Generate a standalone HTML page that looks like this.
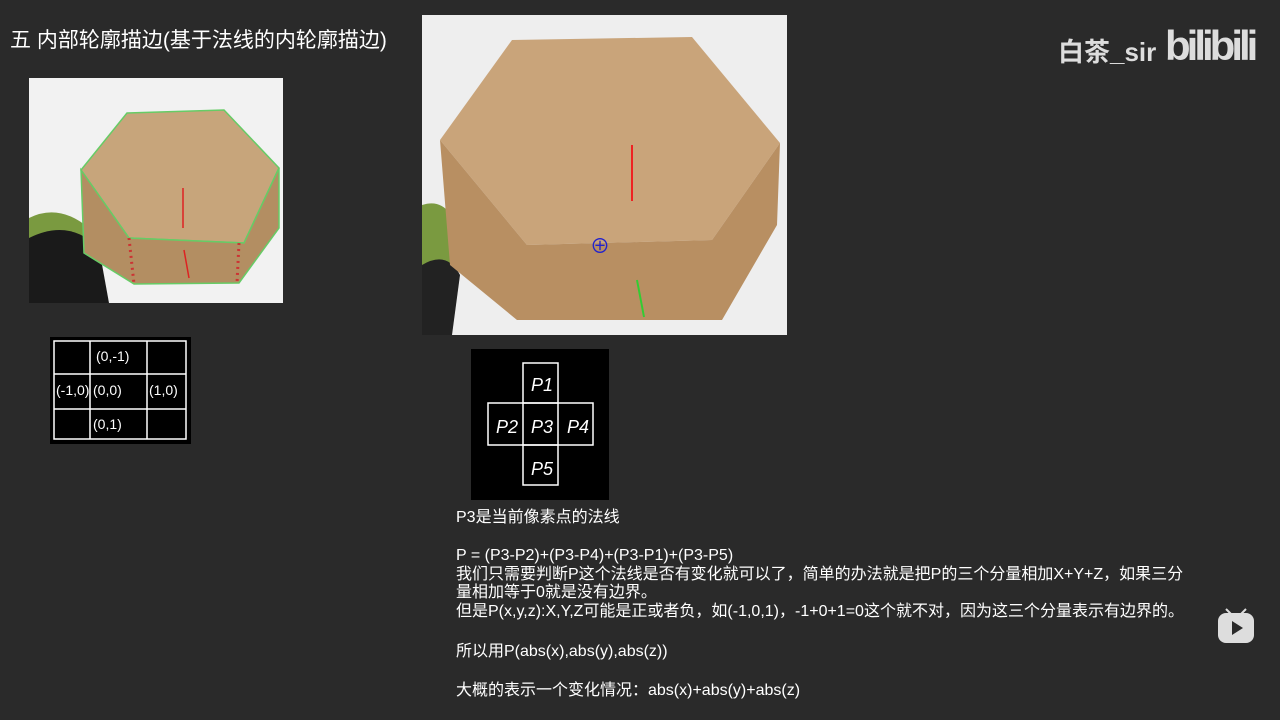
<!DOCTYPE html>
<html><head><meta charset="utf-8"><style>
body{margin:0;width:1280px;height:720px;background:#2a2a2a;position:relative;overflow:hidden;font-family:"Liberation Sans","Noto Sans CJK SC",sans-serif;color:#fff}
.a{position:absolute;white-space:nowrap}
.t{font-size:16px;line-height:17px}
</style></head><body>
<div class="a" style="left:10px;top:24px;font-size:21px">五 内部轮廓描边(基于法线的内轮廓描边)</div>
<div class="a" style="left:1058px;top:32px;font-size:26px;color:#ddd;font-weight:bold">白茶_sir</div>
<div class="a" style="left:1165px;top:22px;font-size:42px;color:#ddd;font-weight:bold;letter-spacing:-4px">bilibili</div>

<svg class="a" style="left:29px;top:78px" width="254" height="225" viewBox="0 0 254 225">
<rect width="254" height="225" fill="#f2f2f2"/>
<path d="M0 140 Q30 125 60 150 L60 225 L0 225Z" fill="#7a9a40"/>
<path d="M0 160 Q40 140 70 170 L80 225 L0 225Z" fill="#1a1a1a"/>
<path d="M52 92 L98 35 L195 32 L250 90 L215 165 L100 160Z" fill="#c7a57b" stroke="#6c6" stroke-width="1.5"/>
<path d="M52 92 L100 160 L215 165 L250 90 L250 150 L210 205 L105 206 L55 175Z" fill="#b38e62" stroke="#6c6" stroke-width="1.5"/>
<path d="M100 160 L105 206 M210 165 L208 205" stroke="#c33" stroke-dasharray="2 4" stroke-width="3"/>
<path d="M154 150 L154 110 M155 172 L160 200" stroke="#d22" stroke-width="1.5"/>
</svg>

<svg class="a" style="left:422px;top:15px" width="365" height="320" viewBox="0 0 365 320">
<rect width="365" height="320" fill="#eeeeee"/>
<path d="M0 190 Q30 180 40 230 L20 320 L0 320Z" fill="#7a9a40"/>
<path d="M0 250 Q25 235 38 260 L30 320 L0 320Z" fill="#222"/>
<path d="M18 125 L90 25 L270 22 L358 128 L290 225 L105 230Z" fill="#c9a47a"/>
<path d="M18 125 L105 230 L290 225 L358 128 L355 210 L300 305 L95 305 L28 250Z" fill="#b88f62"/>
<path d="M210 130 L210 186" stroke="#e22" stroke-width="2"/>
<path d="M215 265 L222 302" stroke="#3c3" stroke-width="2"/>
<text x="168" y="238" fill="#22c" font-size="20">⊕</text>
</svg>

<svg class="a" style="left:50px;top:337px" width="141" height="107">
<rect width="141" height="107" fill="#000"/>
<g stroke="#fff" fill="none" stroke-width="1.5"><rect x="4" y="4" width="132" height="98"/><path d="M40 4V102M97 4V102M4 37H136M4 72H136"/></g>
<g fill="#fff" font-size="14"><text x="46" y="24">(0,-1)</text><text x="6" y="58">(-1,0)</text><text x="43" y="58">(0,0)</text><text x="99" y="58">(1,0)</text><text x="43" y="92">(0,1)</text></g>
</svg>

<svg class="a" style="left:471px;top:349px" width="138" height="151">
<rect width="138" height="151" fill="#000"/>
<g stroke="#fff" fill="none" stroke-width="1.5"><rect x="52" y="14" width="35" height="40"/><rect x="17" y="54" width="105" height="42"/><path d="M52 54V96M87 54V96"/><rect x="52" y="96" width="35" height="40"/></g>
<g fill="#fff" font-size="18" font-style="italic"><text x="60" y="42">P1</text><text x="25" y="84">P2</text><text x="60" y="84">P3</text><text x="96" y="84">P4</text><text x="60" y="126">P5</text></g>
</svg>

<div class="a t" style="left:456px;top:509px">P3是当前像素点的法线</div>
<div class="a t" style="left:456px;top:547px">P = (P3-P2)+(P3-P4)+(P3-P1)+(P3-P5)</div>
<div class="a t" style="left:456px;top:566px">我们只需要判断P这个法线是否有变化就可以了，简单的办法就是把P的三个分量相加X+Y+Z，如果三分</div>
<div class="a t" style="left:456px;top:584px">量相加等于0就是没有边界。</div>
<div class="a t" style="left:456px;top:603px">但是P(x,y,z):X,Y,Z可能是正或者负，如(-1,0,1)，-1+0+1=0这个就不对，因为这三个分量表示有边界的。</div>
<div class="a t" style="left:456px;top:643px">所以用P(abs(x),abs(y),abs(z))</div>
<div class="a t" style="left:456px;top:682px">大概的表示一个变化情况：abs(x)+abs(y)+abs(z)</div>

<svg class="a" style="left:1217px;top:608px" width="38" height="38"><rect x="1" y="5" width="36" height="30" rx="8" fill="#ddd"/><path d="M9 1L14 6M29 1L24 6" stroke="#ddd" stroke-width="2"/><path d="M15 13L26 20L15 27Z" fill="#2a2a2a"/></svg>
</body></html>
